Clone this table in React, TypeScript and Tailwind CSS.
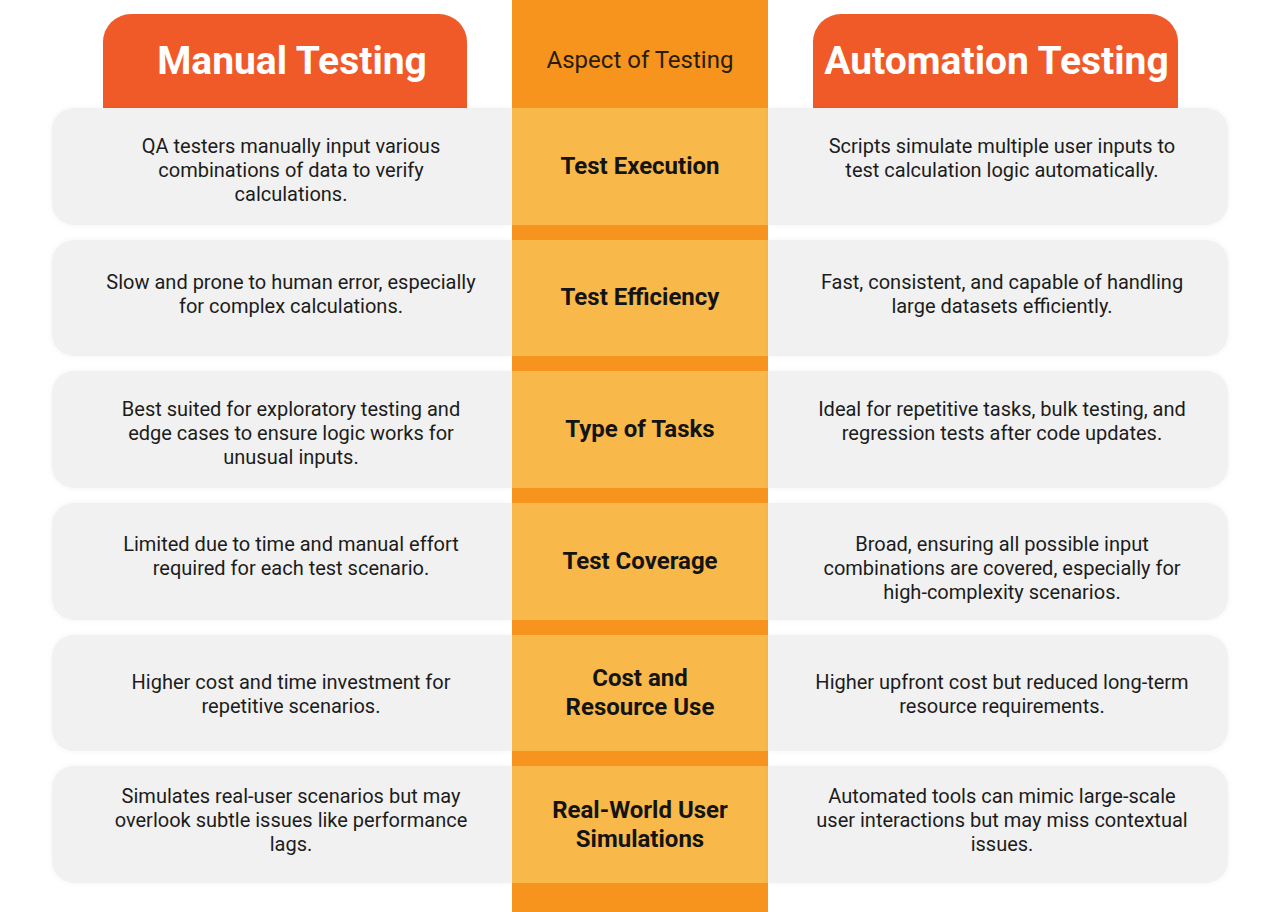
const rows = [
  {
    aspect: ["Test Execution"],
    pt: "pt-[26px]",
    manual: ["QA testers manually input various", "combinations of data to verify", "calculations."],
    auto: ["Scripts simulate multiple user inputs to", "test calculation logic automatically."],
  },
  {
    aspect: ["Test Efficiency"],
    pt: "pt-[30px]",
    manual: ["Slow and prone to human error, especially", "for complex calculations."],
    auto: ["Fast, consistent, and capable of handling", "large datasets efficiently."],
  },
  {
    aspect: ["Type of Tasks"],
    pt: "pt-[26px]",
    manual: ["Best suited for exploratory testing and", "edge cases to ensure logic works for", "unusual inputs."],
    auto: ["Ideal for repetitive tasks, bulk testing, and", "regression tests after code updates."],
  },
  {
    aspect: ["Test Coverage"],
    pt: "pt-[29px]",
    manual: ["Limited due to time and manual effort", "required for each test scenario."],
    auto: ["Broad, ensuring all possible input", "combinations are covered, especially for", "high-complexity scenarios."],
  },
  {
    aspect: ["Cost and", "Resource Use"],
    pt: "pt-[35px]",
    manual: ["Higher cost and time investment for", "repetitive scenarios."],
    auto: ["Higher upfront cost but reduced long-term", "resource requirements."],
  },
  {
    aspect: ["Real-World User", "Simulations"],
    pt: "pt-[18px]",
    manual: ["Simulates real-user scenarios but may", "overlook subtle issues like performance", "lags."],
    auto: ["Automated tools can mimic large-scale", "user interactions but may miss contextual", "issues."],
  },
]

function Lines({ lines }: { lines: string[] }) {
  return (
    <>
      {lines.map((l, i) => (
        <span key={i} className="block whitespace-nowrap">
          {l}
        </span>
      ))}
    </>
  )
}

export default function App() {
  return (
    <div className="w-[1280px] h-[912px] bg-white font-['Roboto','Liberation_Sans',sans-serif] pl-[52px] flex overflow-hidden">
      {/* manual column */}
      <div className="w-[460px] flex flex-col">
        <div className="h-[108px] flex items-end pl-[51px] pr-[45px]">
          <div className="h-[94px] w-full rounded-t-[28px] bg-[#f05a28] flex items-center justify-center pl-[14px] text-white text-[39px] font-bold whitespace-nowrap">
            Manual Testing
          </div>
        </div>
        <div className="flex flex-col gap-[15.2px]">
          {rows.map((r) => (
            <div
              key={r.aspect.join(" ")}
              className={`h-[116.5px] rounded-l-[22px] bg-[#f1f1f1] shadow-[0_0_6px_rgba(0,0,0,0.05)] flex flex-col items-center text-center text-[20px] leading-[24px] text-[#1c1c1c] pl-[18px] pr-[0px] ${r.pt}`}
            >
              <Lines lines={r.manual} />
            </div>
          ))}
        </div>
      </div>

      {/* aspect column */}
      <div className="w-[256px] h-[912px] bg-[#f7941d] flex flex-col">
        <div className="h-[108px] pt-[12px] flex items-center justify-center text-[24px] text-[#2a1c0c] whitespace-nowrap">
          Aspect of Testing
        </div>
        <div className="flex flex-col gap-[15.2px]">
          {rows.map((r) => (
            <div
              key={r.aspect.join(" ")}
              className="h-[116.5px] bg-[#f8b94a] flex flex-col items-center justify-center text-center font-bold text-[24px] leading-[29px] text-[#141414]"
            >
              <Lines lines={r.aspect} />
            </div>
          ))}
        </div>
      </div>

      {/* automation column */}
      <div className="w-[460px] flex flex-col">
        <div className="h-[108px] flex items-end pl-[45px] pr-[50px]">
          <div className="h-[94px] w-full rounded-t-[28px] bg-[#f05a28] flex items-center justify-center pl-[2px] text-white text-[39px] font-bold whitespace-nowrap">
            Automation Testing
          </div>
        </div>
        <div className="flex flex-col gap-[15.2px]">
          {rows.map((r) => (
            <div
              key={r.aspect.join(" ")}
              className={`h-[116.5px] rounded-r-[22px] bg-[#f1f1f1] shadow-[0_0_6px_rgba(0,0,0,0.05)] flex flex-col items-center text-center text-[20px] leading-[24px] text-[#1c1c1c] pl-[8px] pr-[0px] ${r.pt}`}
            >
              <Lines lines={r.auto} />
            </div>
          ))}
        </div>
      </div>
    </div>
  )
}
